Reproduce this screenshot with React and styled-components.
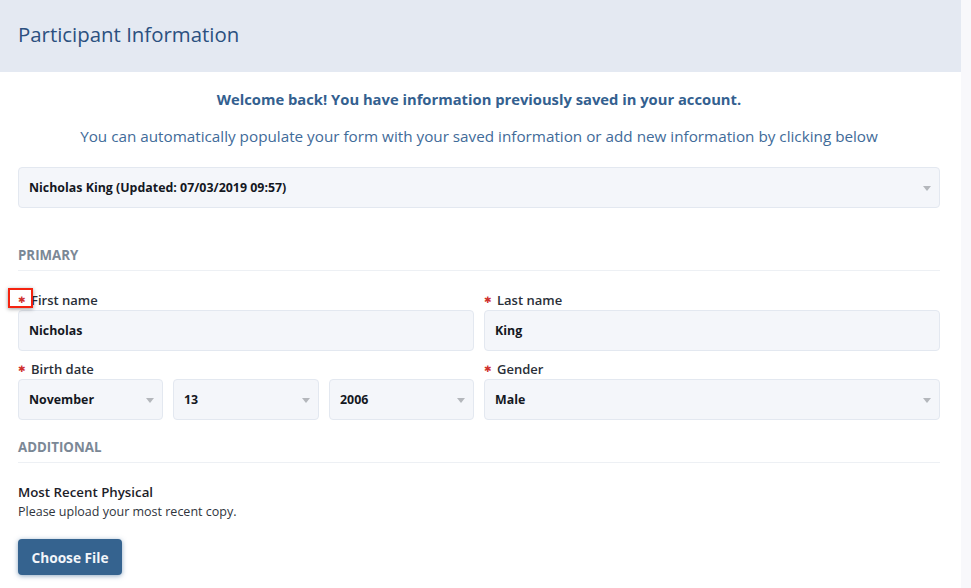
import React from 'react'
import styled, { createGlobalStyle } from 'styled-components'

const Global = createGlobalStyle`
  html, body {
    margin: 0;
    height: 100%;
    background: #f8f8fb;
    overflow: hidden;
  }
  body {
    font-family: "Open Sans", "Liberation Sans", sans-serif;
  }
`

const Panel = styled.div`
  width: 961px;
  height: 588px;
  background: #fff;
  box-sizing: border-box;
`

const Header = styled.div`
  height: 72px;
  background: #e4e9f2;
  display: flex;
  align-items: center;
  padding: 0 18px 4px;
  box-sizing: border-box;
`

const Title = styled.h1`
  margin: 0;
  font-size: 20.4px;
  font-weight: 400;
  color: #2b5080;
`

const Body = styled.div`
  padding: 17px 21px 0 18px;
`

const Welcome = styled.p`
  margin: 0;
  height: 20px;
  line-height: 20px;
  text-align: center;
  font-size: 14.75px;
  font-weight: 700;
  color: #33608f;
`

const Intro = styled.p`
  margin: 17px 0 0;
  height: 20px;
  line-height: 20px;
  text-align: center;
  font-size: 15.25px;
  color: #3f6b99;
`

const Field = styled.div`
  height: 41px;
  box-sizing: border-box;
  background: #f4f6fa;
  border: 1px solid #e3e8f0;
  border-radius: 4px;
  padding: 0 10px;
  display: flex;
  align-items: center;
  justify-content: space-between;
  font-size: 12.4px;
  font-weight: 700;
  color: #14181f;
  margin-top: ${props => props.$top || 0}px;
`

const Caret = styled.span`
  width: 0;
  height: 0;
  margin-right: -2px;
  margin-top: 2px;
  border-left: 4px solid transparent;
  border-right: 4px solid transparent;
  border-top: 5px solid #b4b7bc;
`

const SectionTitle = styled.div`
  margin-top: ${props => props.$top}px;
  padding-bottom: 5px;
  height: 20px;
  line-height: 20px;
  font-size: 13.3px;
  font-weight: 700;
  color: #7b8896;
  border-bottom: 1px solid #edf0f4;
`

const Grid = styled.div`
  display: grid;
  grid-template-columns: 456px 456px;
  column-gap: 10px;
  row-gap: 9px;
  margin-top: ${props => props.$top}px;
`

const Label = styled.label`
  display: flex;
  align-items: center;
  gap: 6px;
  height: 17px;
  padding-bottom: 2px;
  font-size: 13px;
  font-weight: 600;
  color: #2a2f38;
`

const Star = styled.span`
  color: #d0312d;
  font-family: "DejaVu Sans", sans-serif;
  font-size: 9px;
  font-weight: 700;
  width: 7px;
  line-height: 10px;
`

const DateRow = styled.div`
  display: grid;
  grid-template-columns: 145px 146px 145px;
  column-gap: 10px;
`

const Marked = styled.div`
  position: relative;
`

const Callout = styled.span`
  position: absolute;
  left: -10px;
  top: -3px;
  width: 25px;
  height: 20px;
  box-sizing: border-box;
  border: 2px solid #f5230f;
  box-shadow: 0 1px 4px rgba(0, 0, 0, 0.4);
`

const UploadTitle = styled.div`
  margin-top: 20px;
  height: 19px;
  line-height: 19px;
  font-size: 13.3px;
  font-weight: 600;
  color: #1c2129;
`

const UploadHint = styled.div`
  height: 19px;
  line-height: 19px;
  font-size: 12.5px;
  color: #30353d;
`

const FileButton = styled.button`
  display: block;
  margin-top: 18px;
  width: 104px;
  height: 36px;
  padding: 0;
  border: 0;
  border-radius: 4px;
  background: #35638f;
  box-shadow: 0 1px 5px rgba(53, 99, 143, 0.55);
  color: #f2f5f9;
  font-family: inherit;
  font-size: 13.7px;
  font-weight: 700;
`

function Select({ value, top }) {
  return (
    <Field $top={top}>
      {value}
      <Caret />
    </Field>
  )
}

export default function App() {
  return (
    <>
      <Global />
      <Panel>
        <Header>
          <Title>Participant Information</Title>
        </Header>
        <Body>
          <Welcome>Welcome back! You have information previously saved in your account.</Welcome>
          <Intro>
            You can automatically populate your form with your saved information or add new information by clicking below
          </Intro>
          <Select top={21} value="Nicholas King (Updated: 07/03/2019 09:57)" />

          <SectionTitle $top={37}>PRIMARY</SectionTitle>
          <Grid $top={20}>
            <Marked>
              <Callout />
              <Label><Star>✱</Star>First name</Label>
              <Field>Nicholas</Field>
            </Marked>
            <div>
              <Label><Star>✱</Star>Last name</Label>
              <Field>King</Field>
            </div>
            <div>
              <Label><Star>✱</Star>Birth date</Label>
              <DateRow>
                <Select value="November" />
                <Select value="13" />
                <Select value="2006" />
              </DateRow>
            </div>
            <div>
              <Label><Star>✱</Star>Gender</Label>
              <Select value="Male" />
            </div>
          </Grid>

          <SectionTitle $top={17}>ADDITIONAL</SectionTitle>
          <UploadTitle>Most Recent Physical</UploadTitle>
          <UploadHint>Please upload your most recent copy.</UploadHint>
          <FileButton>Choose File</FileButton>
        </Body>
      </Panel>
    </>
  )
}
